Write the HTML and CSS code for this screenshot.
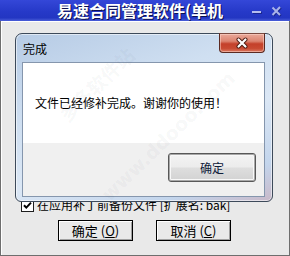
FILE: index.html
```html
<!DOCTYPE html>
<html>
<head>
<meta charset="utf-8">
<link rel="stylesheet" href="styles.css">
</head>
<body>
<div class="window">
  <div class="titlebar">
    <span class="title">易速合同管理软件(单机</span>
    <span class="ctrl min"><span class="bar"></span></span>
    <span class="ctrl close">
      <svg width="12" height="12" viewBox="0 0 12 12"><path d="M2.5 2.5 L10 10 M10 2 L2.5 10" stroke="#1a2690" stroke-width="2.4" transform="translate(0.8,0.8)"/><path d="M2.5 2.5 L10 10 M10 2 L2.5 10" stroke="#a9b3ea" stroke-width="2"/></svg>
    </span>
  </div>
  <div class="client">
    <div class="check-row">
      <span class="checkbox"><svg width="11" height="11" viewBox="0 0 11 11"><path d="M2 5.2 L4.3 7.6 L9 2.6" fill="none" stroke="#000" stroke-width="2"/></svg></span>
      <span class="check-label">在应用补丁前备份文件 [扩展名: bak]</span>
    </div>
    <div class="btn-row">
      <button class="btn">确定 (<u>O</u>)</button>
      <button class="btn">取消 (<u>C</u>)</button>
    </div>
  </div>
  <div class="dialog">
    <div class="dlg-title">完成</div>
    <div class="dlg-close">
      <svg width="16" height="12" viewBox="0 0 16 12"><path d="M4.5 2.5 L11.5 9.5 M11.5 2.5 L4.5 9.5" stroke="#4b1a10" stroke-width="4" stroke-linecap="round"/><path d="M4.5 2.5 L11.5 9.5 M11.5 2.5 L4.5 9.5" stroke="#fff" stroke-width="2.2" stroke-linecap="round"/></svg>
    </div>
    <div class="dlg-content">
      <div class="dlg-msg">文件已经修补完成。谢谢你的使用！</div>
      <div class="dlg-foot"><button class="dlg-btn">确定</button></div>
    </div>
  </div>
  <div class="wm wm1">多多软件站</div>
  <div class="wm wm2">www.ddooo.com</div>
</div>
</body>
</html>
```

FILE: styles.css
```css
body {
  margin: 0;
}

.window {
  position: relative;
  width: 290px;
  height: 256px;
  overflow: hidden;
  font-family: "Noto Sans CJK SC", "Noto Sans", sans-serif;
  background: #e9e9e9;
}

.titlebar {
  height: 21px;
  display: flex;
  align-items: center;
  box-sizing: border-box;
  padding-left: 57px;
  background: linear-gradient(#3447d8 0%, #2639c8 55%, #2336c2 85%, #4a5ed8 100%);
}

.title {
  flex: 1;
  font-size: 16px;
  font-weight: bold;
  line-height: 21px;
  color: #fff;
  white-space: nowrap;
  text-shadow: 1px 1px 0 #0a0f50;
}

.ctrl {
  display: flex;
  align-items: center;
  justify-content: center;
  height: 21px;
}

.min {
  width: 10px;
  margin-right: 9px;
}

.min .bar {
  width: 9px;
  height: 2px;
  margin-top: 2px;
  background: #b4bdef;
  box-shadow: 1px 1px 0 #1a2690;
}

.close {
  width: 12px;
  margin-right: 8px;
}

.client {
  box-sizing: border-box;
  height: 235px;
  border: 1px solid #6e6e6e;
  border-top: none;
  box-shadow: inset 1px 1px 0 #ffffff;
  padding: 177px 0 0 20px;
}

.check-row {
  display: flex;
  align-items: center;
  gap: 3px;
  height: 14px;
}

.checkbox {
  box-sizing: border-box;
  width: 13px;
  height: 13px;
  border: 1px solid #1e1e1e;
  background: #fff;
  display: flex;
  align-items: center;
  justify-content: center;
}

.check-label {
  font-size: 12px;
  line-height: 14px;
  color: #000;
  white-space: nowrap;
}

.btn-row {
  display: flex;
  gap: 23px;
  margin: 8px 0 0 37px;
}

.btn {
  box-sizing: border-box;
  width: 75px;
  height: 21px;
  border: 1px solid #000;
  background: #e9e9e9;
  box-shadow: inset 1px 1px 0 #fff, inset -1px -1px 0 #a0a0a0;
  font-family: "Noto Sans CJK SC", sans-serif;
  font-size: 13px;
  line-height: 17px;
  padding: 0;
  color: #000;
}

.dialog {
  position: absolute;
  left: 15px;
  top: 33px;
  width: 258px;
  height: 169px;
  box-sizing: border-box;
  border: 1px solid #3d4a5a;
  border-radius: 7px 7px 6px 6px;
  padding: 0 7px 4px 6px;
  background: linear-gradient(160deg, #b6cbe5 0%, #cfdff1 35%, #dbe7f5 60%, #c3d5ec 85%, #c9b9c9 100%);
  box-shadow: inset 0 0 0 1px rgba(255, 255, 255, 0.55);
}

.dlg-title {
  height: 28px;
  display: flex;
  align-items: center;
  padding-left: 1px;
  font-size: 12px;
  color: #000;
}

.dlg-close {
  position: absolute;
  left: 203px;
  top: -1px;
  width: 46px;
  height: 20px;
  box-sizing: border-box;
  border: 1px solid #5b2a22;
  border-top-color: #7a4a40;
  border-radius: 0 0 4px 4px;
  background: linear-gradient(#eaa99a 0%, #dc8470 40%, #c4402a 55%, #c84a32 80%, #dc7a62 100%);
  box-shadow: inset 0 0 0 1px rgba(255, 220, 210, 0.5);
  display: flex;
  align-items: center;
  justify-content: center;
}

.dlg-content {
  box-sizing: border-box;
  height: 135px;
  border: 1px solid #8596ad;
  background: #fff;
  display: flex;
  flex-direction: column;
}

.dlg-msg {
  height: 80px;
  display: flex;
  align-items: center;
  padding: 0 0 2px 12px;
  box-sizing: border-box;
  font-size: 12px;
  color: #000;
  white-space: nowrap;
}

.dlg-foot {
  flex: 1;
  background: #f0f0f0;
  display: flex;
  justify-content: flex-end;
  align-items: flex-start;
  padding: 10px 8px 0 0;
}

.dlg-btn {
  box-sizing: border-box;
  width: 88px;
  height: 29px;
  border: 1px solid #585858;
  border-radius: 3px;
  background: linear-gradient(#f4f4f4 0%, #ececec 48%, #dedede 52%, #d2d2d2 100%);
  box-shadow: inset 0 0 0 1px #a8a8a8, inset 0 0 0 2px #f8f8f8;
  font-family: "Noto Sans CJK SC", sans-serif;
  font-size: 12px;
  color: #10203a;
  padding: 0;
}

.wm {
  position: absolute;
  transform: translate(-50%, -50%) rotate(-44deg);
  font-family: "DejaVu Sans", "Noto Sans CJK SC", sans-serif;
  font-size: 19px;
  font-weight: bold;
  color: rgba(60, 70, 90, 0.05);
  white-space: nowrap;
  pointer-events: none;
}

.wm1 {
  left: 96px;
  top: 84px;
}

.wm2 {
  left: 168px;
  top: 136px;
}
```
